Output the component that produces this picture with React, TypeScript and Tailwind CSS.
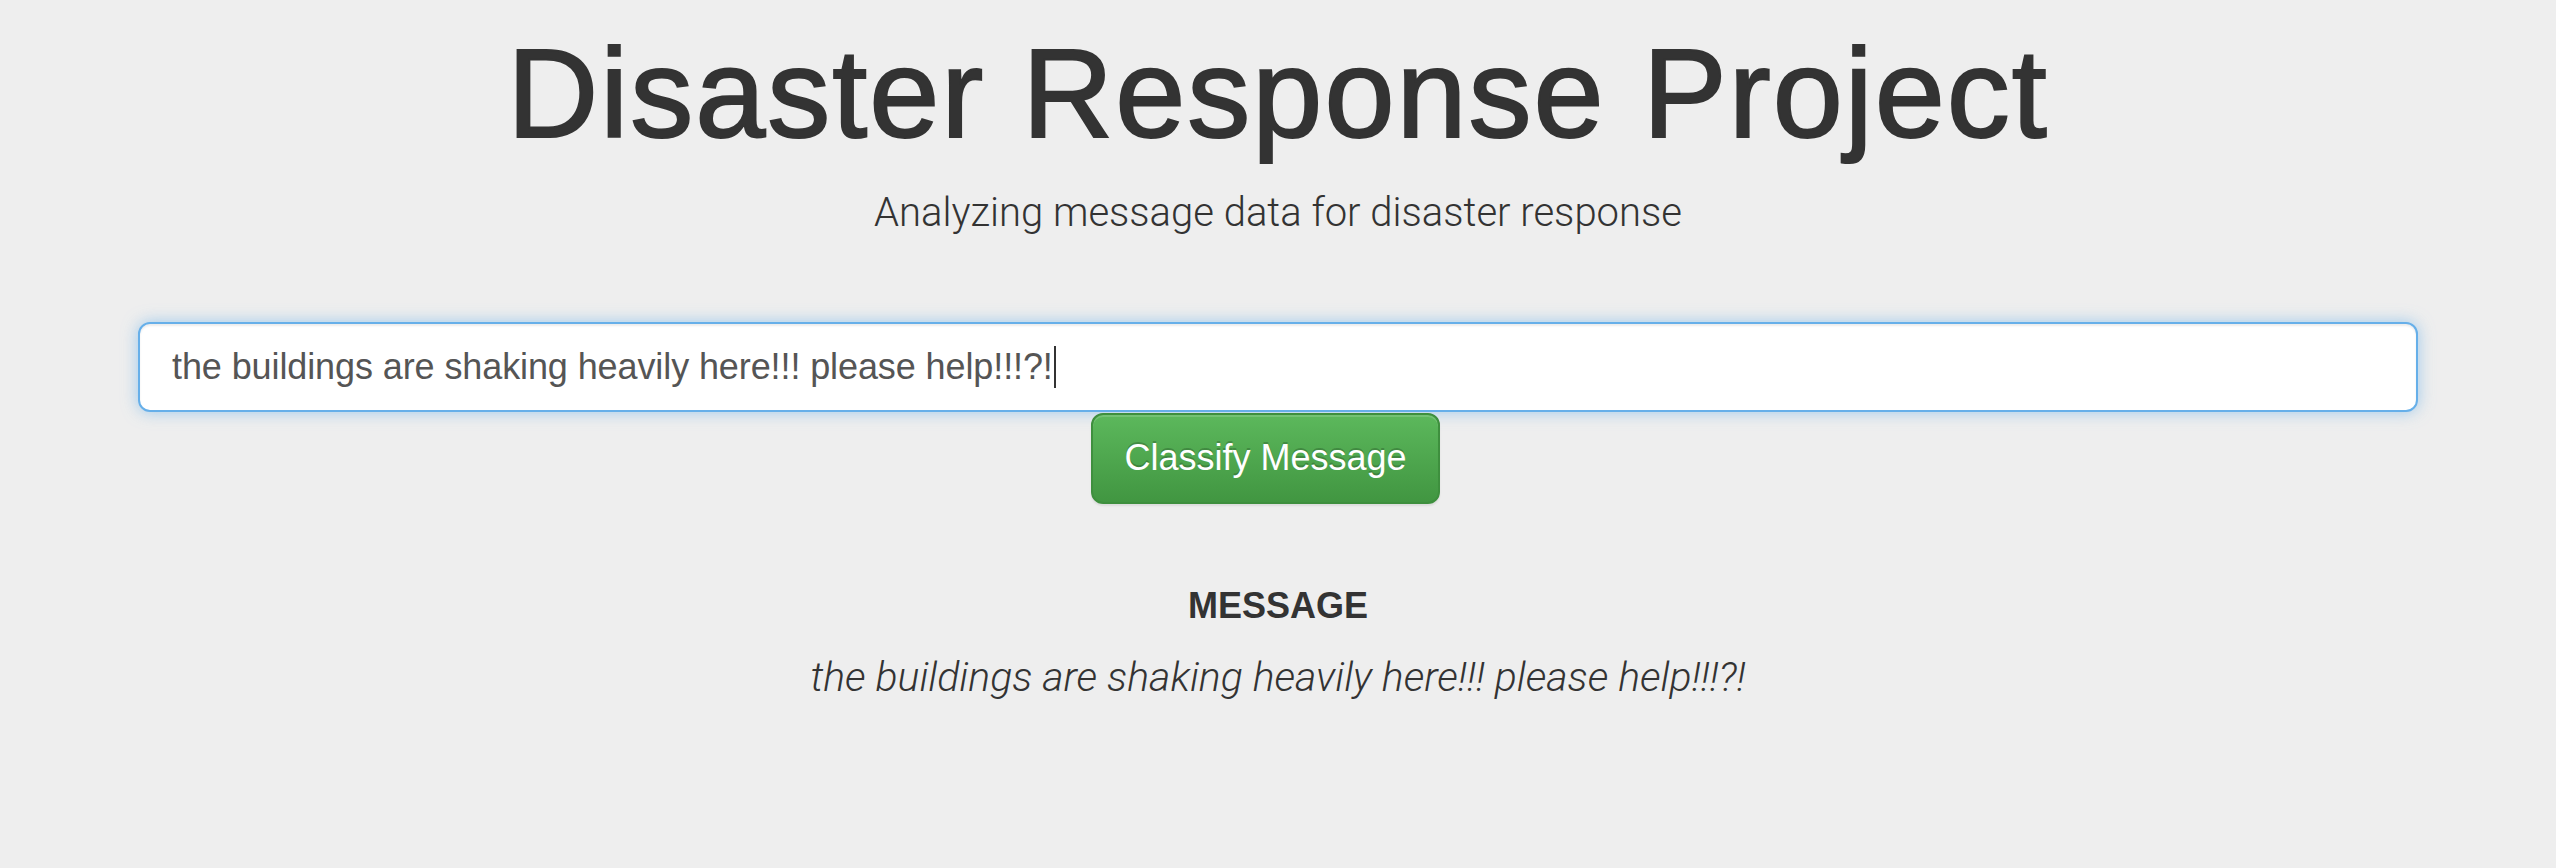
export default function App() {
    const message = "the buildings are shaking heavily here!!! please help!!!?!";

    return (
        <div className="min-h-[868px] w-full bg-[#eeeeee] text-[#333333] font-['Liberation_Sans',Arial,sans-serif]">
            {/* Jumbotron header */}
            <div className="flex flex-col items-center pt-[25px]">
                <h1 className="text-[126px] leading-[1.1] font-normal tracking-[2px] [-webkit-text-stroke:2px_#333333]">
                    Disaster Response Project
                </h1>
                <p className="mt-[21px] text-[40px] leading-[1.4] font-light font-['Roboto',sans-serif]">
                    Analyzing message data for disaster response
                </p>
            </div>

            {/* Message form */}
            <div className="mx-auto w-[2340px] px-[30px] mt-[81px]">
                <div className="flex h-[90px] items-center rounded-[12px] border-2 border-[#66afe9] bg-white px-[32px] text-[36px] text-[#555555] shadow-[inset_0_2px_2px_rgba(0,0,0,0.075),0_0_16px_rgba(102,175,233,0.6)]">
                    <span className="tracking-[-0.1px]">{message}</span>
                    <span className="ml-[1px] h-[42px] w-[2px] bg-[#333333]"></span>
                </div>
                <div className="flex pl-[953px] pt-[1px]">
                    <button className="h-[91px] w-[349px] rounded-[12px] border-2 border-[#3e8f3e] bg-gradient-to-b from-[#5cb85c] to-[#419641] text-[36px] text-white shadow-[inset_0_2px_0_rgba(255,255,255,0.15),0_2px_2px_rgba(0,0,0,0.075)] [text-shadow:0_-2px_0_rgba(0,0,0,0.2)]">
                        Classify Message
                    </button>
                </div>
            </div>

            {/* Classification result */}
            <div className="flex flex-col items-center mt-[82px]">
                <h4 className="text-[36px] leading-[1.1] font-bold">MESSAGE</h4>
                <p className="mt-[24px] text-[41px] leading-[1.4] font-light italic font-['Roboto',sans-serif]">
                    {message}
                </p>
            </div>
        </div>
    );
}
